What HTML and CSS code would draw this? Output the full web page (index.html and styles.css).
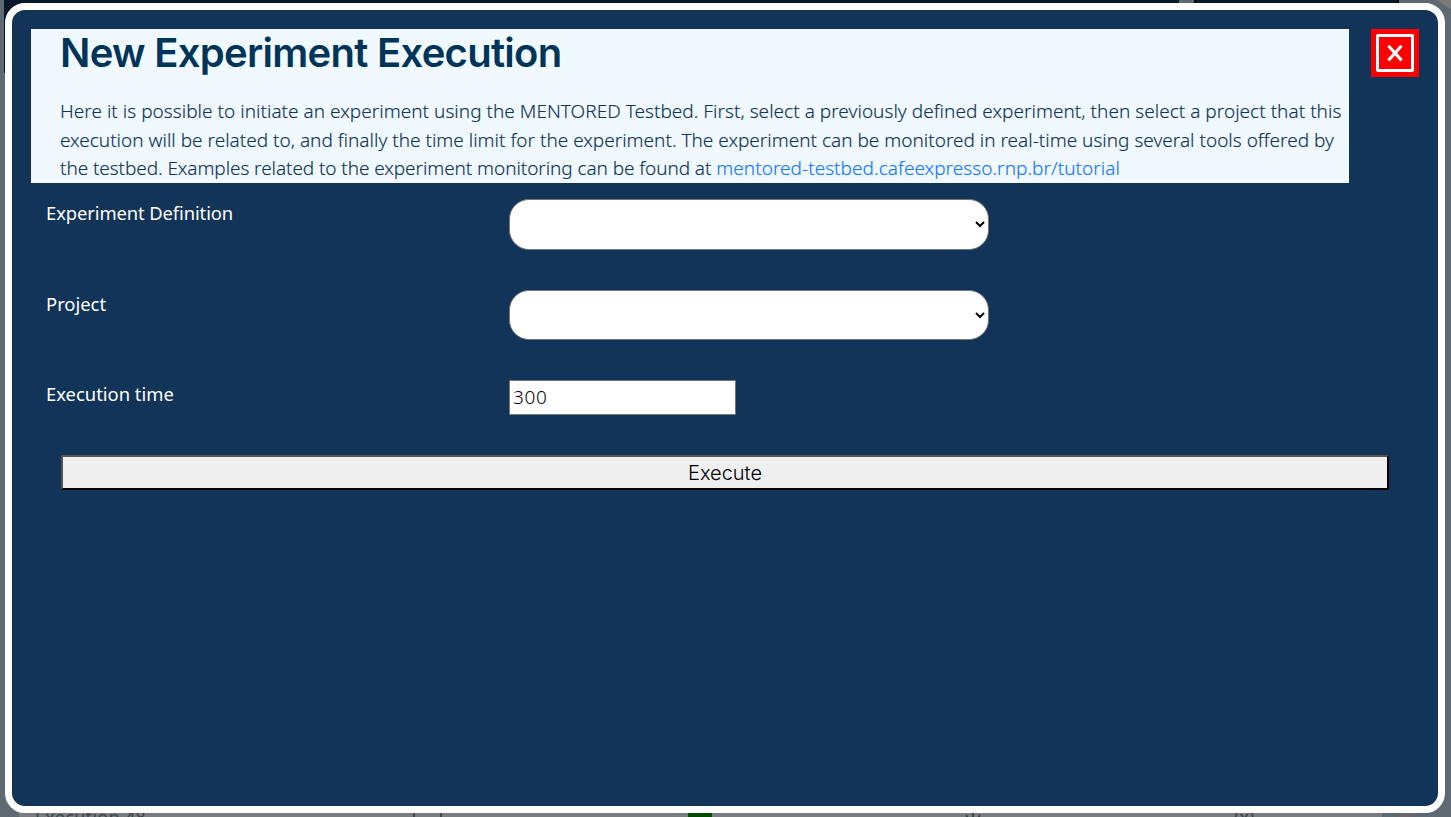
FILE: index.html
```html
<!DOCTYPE html>
<html lang="en">
<head>
<meta charset="utf-8">
<title>New Experiment Execution</title>
<link rel="stylesheet" href="styles.css">
</head>
<body>
<div class="page" aria-hidden="true">
  <div class="page-nav"></div>
  <div class="page-nav page-nav-side"></div>
  <div class="corner"></div>
  <div class="page-table">
    <span class="cell-name">Execution 48</span>
    <span class="rule rule-a"></span>
    <span class="rule rule-b"></span>
    <span class="status"></span>
    <svg class="download" width="18" height="18" viewBox="0 0 18 18"><path d="M2 2l3 5M9 0v12M16 2l-3 5" stroke="#3c4249" stroke-width="2" fill="none"/></svg>
    <span class="cell-action">(x)</span>
  </div>
  <div class="scroll"></div>
</div>
<main class="modal">
  <header class="top">
    <section class="intro">
      <h1>New Experiment Execution</h1>
      <p>
        <span class="line line-1">Here it is possible to initiate an experiment using the MENTORED Testbed. First, select a previously defined experiment, then select a project that this</span>
        <span class="line line-2">execution will be related to, and finally the time limit for the experiment. The experiment can be monitored in real-time using several tools offered by</span>
        <span class="line line-3">the testbed. Examples related to the experiment monitoring can be found at <a>mentored-testbed.cafeexpresso.rnp.br/tutorial</a></span>
      </p>
    </section>
    <button class="close" aria-label="Close"><svg width="48" height="48" viewBox="0 0 48 48"><rect x="6.5" y="6.5" width="35" height="35" rx=".5" fill="none" stroke="#fff" stroke-width="3"/><path d="M17.4 16.8L30.6 31.4M30.6 16.8L17.4 31.4" stroke="#fff" stroke-width="3.1"/></svg></button>
  </header>
  <form class="form">
    <label class="label-def" for="definition">Experiment Definition</label>
    <select id="definition"></select>
    <label class="label-project" for="project">Project</label>
    <select id="project"></select>
    <label class="label-time" for="time">Execution time</label>
    <input id="time" value="300">
  </form>
  <button class="execute">Execute</button>
</main>
</body>
</html>
```
FILE: styles.css
```css
* { box-sizing: border-box; }
body { margin: 0; width: 1451px; height: 817px; overflow: hidden; background: #5e6972; font-family: "Noto Sans", sans-serif; }
.page { position: absolute; inset: 0; overflow: hidden; }
.page-nav { position: absolute; left: 4px; top: 0; width: 1175px; height: 73px; background: #071829; }
.page-nav-side { left: 1194px; width: 205px; height: 20px; border: solid #000; border-width: 0 2px; }
.corner { position: absolute; right: 0; top: 0; width: 14px; height: 9px; background: #7b7b79; clip-path: polygon(0 0, 100% 0, 100% 100%); }
.page-table { position: absolute; left: 19px; top: 800px; width: 1363px; height: 17px; background: #7a7d80; overflow: hidden; color: #3c4249; }
.cell-name { position: absolute; left: 16px; top: 5px; font-size: 18px; line-height: 24px; letter-spacing: .3px; }
.rule { position: absolute; top: 0; width: 2px; height: 17px; background: #3f464f; }
.rule-a { left: 394px; }
.rule-b { left: 421px; }
.status { position: absolute; left: 669px; top: 10px; width: 24px; height: 20px; border-radius: 4px; background: #004b00; }
.download { position: absolute; left: 945px; top: 13px; }
.cell-action { position: absolute; left: 1215px; top: 5px; font-size: 18px; line-height: 24px; }
.scroll { position: absolute; left: 1397px; top: 800px; width: 17px; height: 17px; background: #68696c; }
.modal { position: relative; width: 1440px; height: 810px; margin: 3px 0 0 5px; padding: 19px; border: 7px solid #fff; border-radius: 20px; background: #113458; }
.top { display: flex; gap: 22px; align-items: flex-start; }
.intro { width: 1318px; height: 154px; padding: 2px 0 0 29px; background: #f0f9ff; color: #113458; }
h1 { margin: 0; font: 600 40px/43px Inter, sans-serif; letter-spacing: -.72px; color: #003559; white-space: nowrap; }
p { margin: 23px 0 0; font-size: 19px; line-height: 28.5px; font-weight: 300; -webkit-text-stroke: .15px; }
.line { display: block; white-space: nowrap; width: max-content; }
.line-1 { letter-spacing: .027px; }
.line-3 { letter-spacing: -.075px; }
a { color: #1677ff; letter-spacing: .04px; }
.close { width: 48px; height: 48px; padding: 0; border: 0; background: #f00; }
.close svg { display: block; }
.form { display: grid; grid-template-columns: 462px 480px; grid-template-rows: 90.5px 90.5px 75px; padding: 16px 0 0 16px; align-items: start; }
label { position: relative; left: -1px; color: #fff; font-size: 18.4px; line-height: 28px; width: max-content; }
.label-def { letter-spacing: -.1px; }
select { width: 480px; height: 50.5px; padding: 0 1px 0 16px; border: 1px solid #767676; border-radius: 20px; background-color: #fff; }
select:last-of-type { height: 50px; }
input { width: 227px; height: 35px; padding: 0 3px 2px; border: 1px solid #767676; border-radius: 1px; font: 300 19px "Noto Sans", sans-serif; letter-spacing: .6px; color: #000; }
.execute { display: block; width: 1328px; height: 35px; margin: 0 0 0 30px; padding: 0; border: 2px outset #000; background: #efefef; font: 300 20px Inter, sans-serif; color: #000; }
```
